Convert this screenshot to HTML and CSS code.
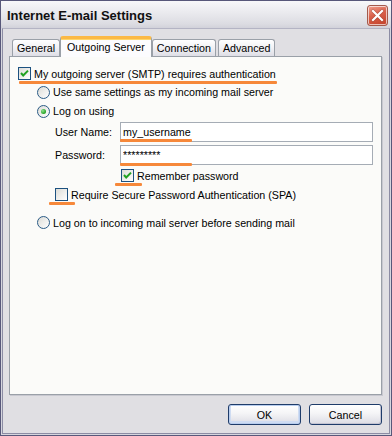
FILE: index.html
```html
<!DOCTYPE html>
<html lang="en">
<head>
    <meta charset="UTF-8">
    <title>Internet E-mail Settings</title>
    <link rel="stylesheet" href="styles.css">
</head>
<body>
    <div class="window">
        <div class="titlebar">
            <span class="title">Internet E-mail Settings</span>
            <span class="close">
                <svg width="19" height="19" viewBox="0 0 19 19">
                    <path d="M5 5 L14 14 M14 5 L5 14" stroke="#7a2a1c" stroke-width="3.4" stroke-linecap="square" opacity="0.35"/>
                    <path d="M5 5 L14 14 M14 5 L5 14" stroke="#fff" stroke-width="2.2" stroke-linecap="square"/>
                </svg>
            </span>
        </div>
        <div class="client">
            <div class="tabs">
                <span class="tab">General</span>
                <span class="tab active">Outgoing Server</span>
                <span class="tab">Connection</span>
                <span class="tab">Advanced</span>
            </div>
            <div class="page">
                <div class="row row-auth">
                    <span class="check"><svg width="11" height="11" viewBox="0 0 11 11"><path d="M2 5 L4.2 7.5 L9 2.6" fill="none" stroke="#21a121" stroke-width="2"/></svg></span>
                    My outgoing server (SMTP) requires authentication
                    <span class="mark mark-auth"></span>
                </div>
                <div class="row row-same indent">
                    <span class="radio"></span>
                    Use same settings as my incoming mail server
                </div>
                <div class="row row-logon indent">
                    <span class="radio on"></span>
                    Log on using
                </div>
                <div class="row field row-user">
                    <span class="label">User Name:</span>
                    <input class="input" type="text" value="my_username">
                    <span class="mark mark-user"></span>
                </div>
                <div class="row field row-pass">
                    <span class="label">Password:</span>
                    <input class="input" type="text" value="*********">
                    <span class="mark mark-pass"></span>
                </div>
                <div class="row row-remember">
                    <span class="check"><svg width="11" height="11" viewBox="0 0 11 11"><path d="M2 5 L4.2 7.5 L9 2.6" fill="none" stroke="#21a121" stroke-width="2"/></svg></span>
                    Remember password
                    <span class="mark mark-remember"></span>
                </div>
                <div class="row row-spa">
                    <span class="check"></span>
                    Require Secure Password Authentication (SPA)
                    <span class="mark mark-spa"></span>
                </div>
                <div class="row row-before indent">
                    <span class="radio"></span>
                    Log on to incoming mail server before sending mail
                </div>
            </div>
            <div class="actions">
                <button class="btn default">OK</button>
                <button class="btn">Cancel</button>
            </div>
        </div>
    </div>
</body>
</html>
```

FILE: styles.css
```css
* {
    box-sizing: border-box;
}
body {
    margin: 0;
    font-family: Tahoma, "Liberation Sans", Arial, sans-serif;
    font-size: 10.7px;
    color: #000;
    background: #fff;
}
.window {
    width: 392px;
    height: 436px;
    border: 1px solid #58587a;
    background: #d6d6de;
    display: flex;
    flex-direction: column;
}
.titlebar {
    height: 27px;
    display: flex;
    align-items: center;
    justify-content: space-between;
    padding: 2px 3px 0 6px;
    background: linear-gradient(#f8f8fa, #ebebef 40%, #dcdce2 85%, #d2d2da);
}
.title {
    font-family: "Liberation Sans", Arial, sans-serif;
    font-weight: bold;
    font-size: 13px;
    color: #111;
}
.close {
    width: 21px;
    height: 21px;
    margin-top: -1px;
    border: 1px solid #a35a4c;
    border-radius: 3px;
    background: linear-gradient(160deg, #f1a291, #d9604a 45%, #c3412a);
    box-shadow: inset 0 0 0 1px rgba(255,255,255,0.65);
    display: flex;
}
.client {
    flex: 1;
    margin: 0 1px 1px;
    border: 1px solid #8c8ca4;
    border-top-color: #b4b4c4;
    background: #e0dfe3;
    padding: 7px 7px 8px 6px;
    display: flex;
    flex-direction: column;
}
.tabs {
    height: 20px;
    display: flex;
    align-items: flex-end;
    padding-left: 3px;
}
.tab {
    height: 17px;
    padding: 0 4px;
    margin-right: 2px;
    border: 1px solid #9aa0a8;
    border-bottom: none;
    border-radius: 3px 3px 0 0;
    background: linear-gradient(#fff, #f1f1f4 50%, #dedee6);
    display: flex;
    align-items: center;
    white-space: nowrap;
}
.tab.active {
    position: relative;
    z-index: 1;
    height: 21px;
    margin: 0 0 -1px -2px;
    padding: 0 6px 3px;
    background: #fcfcfe;
    border-top: 3px solid #fbb945;
    box-shadow: inset 0 1px 0 #ffd66a;
}
.page {
    flex: 1;
    border: 1px solid #9aa0a8;
    background: #fbfbf9;
    box-shadow: 1px 1px 0 #c8c8d0;
    padding: 7px 8px 0;
}
.row {
    position: relative;
    display: flex;
    align-items: center;
    white-space: nowrap;
}
.indent {
    padding-left: 19px;
}
.row-auth { height: 19px; }
.row-same { height: 18px; }
.row-logon { height: 20px; }
.row-user { height: 20px; margin-top: 1px; }
.row-pass { height: 20px; margin-top: 3px; }
.row-remember { height: 21px; padding-left: 103px; }
.row-spa { height: 17px; padding-left: 37px; }
.row-before { height: 19px; margin-top: 10px; }
.field {
    padding-left: 37px;
}
.label {
    width: 65px;
}
.input {
    width: 253px;
    height: 20px;
    border: 1px solid #a5acb5;
    background: #fff;
    padding: 0 2px;
    font: inherit;
    color: #000;
    outline: none;
}
.check {
    width: 13px;
    height: 13px;
    flex: none;
    margin-right: 3px;
    border: 1px solid #1c5180;
    background: linear-gradient(135deg, #dcdcd7, #fff);
    display: flex;
}
.radio {
    position: relative;
    width: 13px;
    height: 13px;
    flex: none;
    margin-right: 3px;
    border: 1px solid #2a5b86;
    border-radius: 50%;
    background: linear-gradient(135deg, #dcdcd7, #fff);
}
.radio.on::after {
    content: "";
    position: absolute;
    left: 3px;
    top: 3px;
    width: 5px;
    height: 5px;
    border-radius: 50%;
    background: radial-gradient(circle at 35% 35%, #8ee28e, #21a121 70%);
}
.mark {
    position: absolute;
    height: 3px;
    border-radius: 1px;
    background: #f6883a;
}
.mark-auth { top: 17px; left: 1px; width: 258px; }
.mark-user { top: 17px; left: 102px; width: 72px; }
.mark-pass { top: 18px; left: 102px; width: 72px; }
.mark-remember { top: 18px; left: 97px; width: 27px; }
.mark-spa { top: 16px; left: 31px; width: 26px; }
.actions {
    margin-top: 9px;
    display: flex;
    justify-content: flex-end;
    gap: 8px;
}
.btn {
    width: 73px;
    height: 21px;
    border: 1px solid #1f3c6a;
    border-radius: 3px;
    background: linear-gradient(#fff, #f4f4f6 45%, #dcdce4);
    box-shadow: inset -1px -1px 0 #c4c4d2;
    font: inherit;
    color: #000;
    padding: 0;
}
.btn.default {
    box-shadow: inset 0 0 0 1px #b8cdee, inset 0 -1px 0 2px #cfdcf2;
}
```
